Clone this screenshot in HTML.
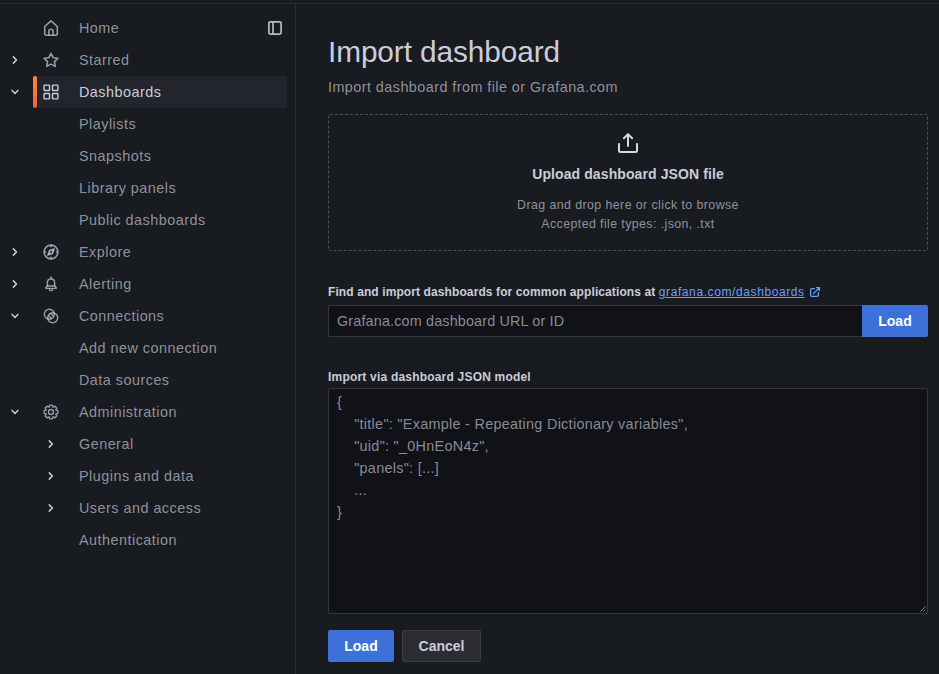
<!DOCTYPE html>
<html><head><meta charset="utf-8">
<style>
html,body{margin:0;padding:0}
body{width:939px;height:674px;overflow:hidden;background:#181b1f;position:relative;font-family:"Liberation Sans",sans-serif;color:#ccccdc}
.abs{position:absolute;white-space:nowrap}
.topline{position:absolute;left:0;top:3px;width:939px;height:1px;background:#2a2d33}
.sideline{position:absolute;left:295px;top:4px;width:1px;height:670px;background:#2a2d33}
.nav{position:absolute;left:79px;font-size:14.4px;letter-spacing:0.48px;color:rgba(204,204,220,0.68);line-height:32px;height:32px}
.active-bg{position:absolute;left:37px;top:76px;width:250px;height:32px;background:#22252b;border-radius:0 2px 2px 0}
.active-bar{position:absolute;left:33px;top:76px;width:4px;height:32px;border-radius:2px;background:linear-gradient(180deg,#ff8833,#f55f3e)}
svg.ic{position:absolute}
.t{position:absolute;white-space:nowrap}
</style></head><body>
<div class="topline"></div>
<div class="sideline"></div>

<!-- sidebar -->
<div class="active-bg"></div>
<div class="active-bar"></div>

<div class="nav" style="top:12px">Home</div>
<div class="nav" style="top:44px">Starred</div>
<div class="nav" style="top:76px;color:#ccccdc">Dashboards</div>
<div class="nav" style="top:108px">Playlists</div>
<div class="nav" style="top:140px">Snapshots</div>
<div class="nav" style="top:172px">Library panels</div>
<div class="nav" style="top:204px">Public dashboards</div>
<div class="nav" style="top:236px">Explore</div>
<div class="nav" style="top:268px">Alerting</div>
<div class="nav" style="top:300px">Connections</div>
<div class="nav" style="top:332px">Add new connection</div>
<div class="nav" style="top:364px">Data sources</div>
<div class="nav" style="top:396px">Administration</div>
<div class="nav" style="top:428px">General</div>
<div class="nav" style="top:460px">Plugins and data</div>
<div class="nav" style="top:492px">Users and access</div>
<div class="nav" style="top:524px">Authentication</div>

<!-- main -->
<div class="t" style="left:328px;top:33.5px;font-size:29.8px;line-height:36px;letter-spacing:-0.1px;color:#ccccdc">Import dashboard</div>
<div class="t" style="left:328px;top:77px;font-size:14.4px;line-height:20px;letter-spacing:0.44px;color:rgba(204,204,220,0.68)">Import dashboard from file or Grafana.com</div>

<div style="position:absolute;left:328px;top:114px;width:598px;height:135px;border:1px dashed rgba(204,204,220,0.3);border-radius:2px"></div>
<div class="t" style="left:328px;width:600px;text-align:center;top:164px;font-size:14px;line-height:20px;font-weight:700;color:#ccccdc;letter-spacing:0.1px">Upload dashboard JSON file</div>
<div class="t" style="left:328px;width:600px;text-align:center;top:196px;font-size:12.4px;line-height:18px;letter-spacing:0.41px;color:rgba(204,204,220,0.68)">Drag and drop here or click to browse</div>
<div class="t" style="left:328px;width:600px;text-align:center;top:214.5px;font-size:12.4px;line-height:18px;letter-spacing:0.4px;color:rgba(204,204,220,0.68)">Accepted file types: .json, .txt</div>

<div class="t" style="left:328px;top:284px;font-size:12px;line-height:16px;font-weight:700;letter-spacing:0.1px;color:#ccccdc">Find and import dashboards for common applications at <span style="font-weight:400;color:#6e9fff;text-decoration:underline;letter-spacing:0.6px">grafana.com/dashboards</span></div>

<div style="position:absolute;left:328px;top:305px;width:533px;height:30px;border:1px solid rgba(204,204,220,0.2);border-right:none;border-radius:2px 0 0 2px;background:#111217"></div>
<div class="t" style="left:337px;top:311px;font-size:14.4px;line-height:20px;letter-spacing:0.15px;color:rgba(204,204,220,0.66)">Grafana.com dashboard URL or ID</div>
<div style="position:absolute;left:862px;top:305px;width:66px;height:32px;background:#3d71d9;border-radius:0 2px 2px 0"></div>
<div class="t" style="left:862px;width:66px;text-align:center;top:311px;font-size:14px;line-height:20px;font-weight:700;color:#fff">Load</div>

<div class="t" style="left:328px;top:369px;font-size:12px;line-height:16px;font-weight:700;letter-spacing:0.2px;color:#ccccdc">Import via dashboard JSON model</div>

<div style="position:absolute;left:328px;top:388px;width:598px;height:224px;border:1px solid rgba(204,204,220,0.2);border-radius:2px;background:#111217"></div>
<div class="t" style="left:337px;top:391px;font-size:14.4px;line-height:22px;letter-spacing:0.29px;color:rgba(204,204,220,0.66)">{<br>&nbsp;&nbsp;&nbsp;&nbsp;"title": "Example - Repeating Dictionary variables",<br>&nbsp;&nbsp;&nbsp;&nbsp;"uid": "_0HnEoN4z",<br>&nbsp;&nbsp;&nbsp;&nbsp;"panels": [...]<br>&nbsp;&nbsp;&nbsp;&nbsp;...<br>}</div>

<div style="position:absolute;left:328px;top:630px;width:66px;height:32px;background:#3d71d9;border-radius:2px"></div>
<div class="t" style="left:328px;width:66px;text-align:center;top:636px;font-size:14px;line-height:20px;font-weight:700;color:#fff">Load</div>
<div style="position:absolute;left:402px;top:630px;width:77px;height:30px;background:#2b2d33;border:1px solid rgba(204,204,220,0.1);border-radius:2px"></div>
<div class="t" style="left:402px;width:79px;text-align:center;top:636px;font-size:14px;line-height:20px;font-weight:700;color:#ccccdc">Cancel</div>


<!-- icons -->
<svg class="ic" style="left:0;top:0" width="939" height="674" viewBox="0 0 939 674" fill="none" stroke-linecap="round" stroke-linejoin="round">
 <g stroke="rgba(204,204,220,0.72)" stroke-width="1.6">
  <!-- home -->
  <path d="M44.7 26.5 L51 20.9 L57.3 26.5 V33.6 Q57.3 35.3 55.6 35.3 H46.4 Q44.7 35.3 44.7 33.6 Z"/>
  <path d="M48.9 35.3 V31.3 Q48.9 29.3 51 29.3 Q53.1 29.3 53.1 31.3 V35.3"/>
  <!-- star -->
  <path d="M51 53.3 L53.1 57.7 L57.9 58.3 L54.4 61.6 L55.3 66.4 L51 64.1 L46.7 66.4 L47.6 61.6 L44.1 58.3 L48.9 57.7 Z"/>
  <!-- compass -->
  <circle cx="51" cy="252" r="6.9"/>
  <path d="M51 245.6 V246.6 M51 257.4 V258.4 M44.6 252 H45.6 M56.4 252 H57.4"/>
  <path d="M54.3 248.7 L52.6 253.6 L47.7 255.3 L49.4 250.4 Z" fill="rgba(204,204,220,0.72)" stroke-width="1.2"/>
  <circle cx="51" cy="252" r="0.9" fill="#181b1f" stroke="none"/>
  <!-- bell -->
  <path d="M51 277 V278.4" stroke-width="1.5"/>
  <path d="M47.4 286 V282.6 Q47.4 278.9 51 278.9 Q54.6 278.9 54.6 282.6 V286" stroke-width="1.5"/>
  <path d="M47.4 286 H54.6 L56.2 287.6 V288.4 H45.8 V287.6 Z" stroke-width="1.4"/>
  <path d="M49.5 288.9 V289.7 Q49.5 290.6 51 290.6 Q52.5 290.6 52.5 289.7 V288.9" stroke-width="1.4"/>
  <!-- connections -->
  <circle cx="49.3" cy="314.3" r="5" stroke-width="1.45"/>
  <circle cx="52.7" cy="317.7" r="5" stroke-width="1.45"/>
  <path d="M50.9 313.8 L53.2 316.1 M48.8 315.9 L51.1 318.2" stroke-width="1.4"/>
  <!-- cog -->
  <circle cx="51" cy="412" r="2.5" stroke-width="1.4"/>
  <path d="M55.96 410.13 L57.87 410.68 L57.87 413.32 L55.96 413.87 L55.83 414.19 L56.80 415.93 L54.93 417.80 L53.19 416.83 L52.87 416.96 L52.32 418.87 L49.68 418.87 L49.13 416.96 L48.81 416.83 L47.07 417.80 L45.20 415.93 L46.17 414.19 L46.04 413.87 L44.13 413.32 L44.13 410.68 L46.04 410.13 L46.17 409.81 L45.20 408.07 L47.07 406.20 L48.81 407.17 L49.13 407.04 L49.68 405.13 L52.32 405.13 L52.87 407.04 L53.19 407.17 L54.93 406.20 L56.80 408.07 L55.83 409.81 Z" stroke-width="1.4"/>
 </g>
 <g stroke="#ccccdc" stroke-width="1.4">
  <!-- apps (active) -->
  <rect x="44.1" y="85.1" width="5.4" height="5.4" rx="0.6"/>
  <rect x="52.5" y="85.1" width="5.4" height="5.4" rx="0.6"/>
  <rect x="44.1" y="93.5" width="5.4" height="5.4" rx="0.6"/>
  <rect x="52.5" y="93.5" width="5.4" height="5.4" rx="0.6"/>
 </g>
 <!-- chevrons top-level -->
 <g stroke="#ccccdc" stroke-width="1.5">
  <path d="M13.4 56.9 L16.5 60 L13.4 63.1"/>
  <path d="M13.4 248.9 L16.5 252 L13.4 255.1"/>
  <path d="M13.4 280.9 L16.5 284 L13.4 287.1"/>
  <path d="M12.1 90.4 L15 93.5 L17.9 90.4"/>
  <path d="M12.1 314.4 L15 317.5 L17.9 314.4"/>
  <path d="M12.1 410.4 L15 413.5 L17.9 410.4"/>
  <path d="M49.2 440.9 L52.4 444 L49.2 447.1"/>
  <path d="M49.2 472.9 L52.4 476 L49.2 479.1"/>
  <path d="M49.2 504.9 L52.4 508 L49.2 511.1"/>
 </g>
 <!-- dock -->
 <g stroke="#b9b9c8" stroke-width="1.7">
  <rect x="268.9" y="21.9" width="12.2" height="12.2" rx="1.3"/>
  <path d="M273 22 V34"/>
 </g>
 <!-- upload -->
 <g stroke="#d8d8e6" stroke-width="2">
  <path d="M619 144 V150.5 Q619 152 620.5 152 H635.5 Q637 152 637 150.5 V144"/>
  <path d="M628 146 V134.2 M623.9 138.2 L628 134.1 L632.1 138.2"/>
 </g>
 <!-- resize -->
 <g stroke="rgba(204,204,220,0.6)" stroke-width="1" stroke-linecap="butt">
  <path d="M920.5 611.5 L925.5 606.5 M923.5 611.5 L925.5 609.5"/>
 </g>
 <!-- external link -->
 <g stroke="#6e9fff" stroke-width="1.3">
  <path d="M814.5 288.6 H812 Q810.6 288.6 810.6 290 V295 Q810.6 296.4 812 296.4 H817 Q818.4 296.4 818.4 295 V292.5"/>
  <path d="M813.4 293.6 L819.4 287.6 M816.4 287.6 H819.4 V290.6"/>
 </g>
</svg>
</body></html>
